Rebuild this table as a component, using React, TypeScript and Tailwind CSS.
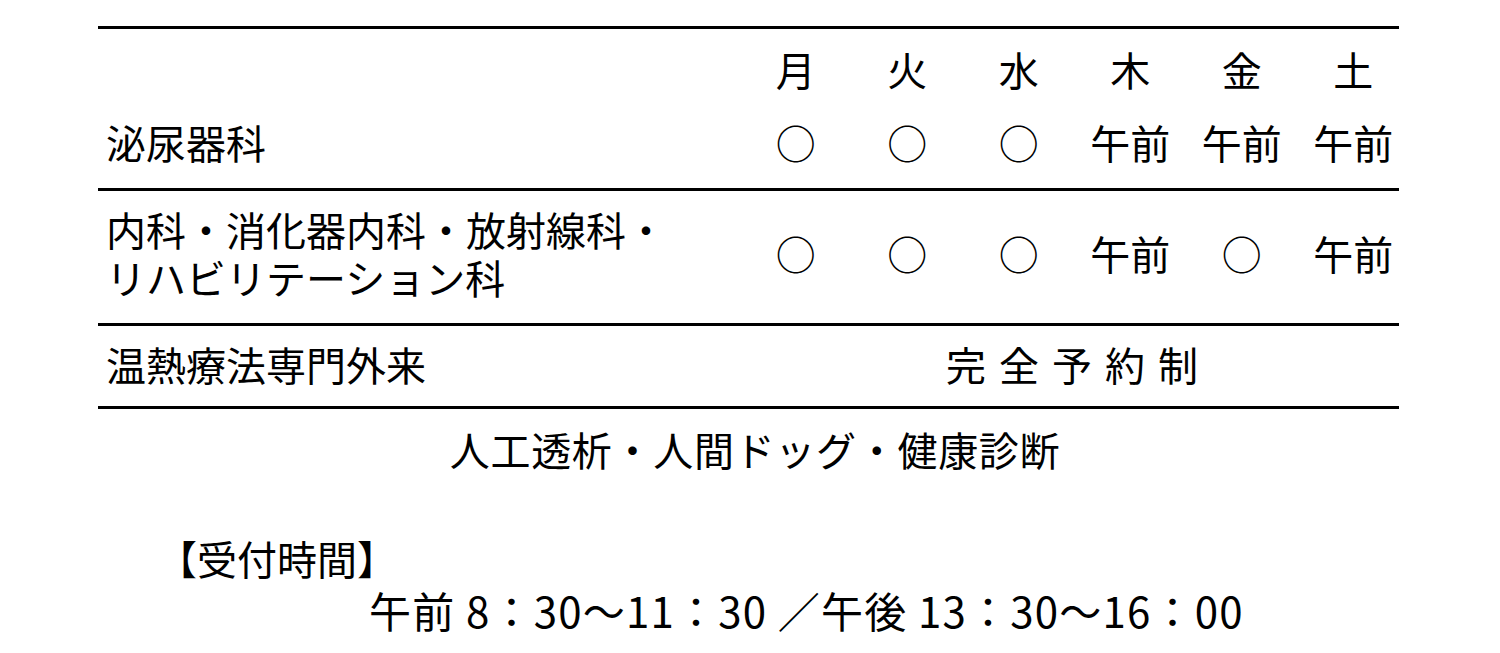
import React from 'react';

const days = ['月', '火', '水', '木', '金', '土'];

const rows = [
  {
    label: ['泌尿器科'],
    marks: ['○', '○', '○', '午前', '午前', '午前']
  },
  {
    label: ['内科・消化器内科・放射線科・', 'リハビリテーション科'],
    marks: ['○', '○', '○', '午前', '○', '午前']
  }
];

const App: React.FC = () => {
  return (
    <div className="w-[1500px] h-[653px] bg-white text-black font-['Noto_Sans_CJK_JP',sans-serif] text-[40px] leading-[40px] overflow-hidden">
      <div className="ml-[98px] w-[1301px] pt-[26px]">
        {/* 曜日 + 泌尿器科 */}
        <div className="border-t-[3px] border-black pt-[20px] pb-[26px]">
          <div className="grid grid-cols-[1fr_repeat(6,111.5px)] -mr-[10px]">
            <div></div>
            {days.map((d) => (
              <div key={d} className="text-center">{d}</div>
            ))}
          </div>
          <div className="grid grid-cols-[1fr_repeat(6,111.5px)] -mr-[10px] mt-[33px]">
            <div className="pl-[8px]">{rows[0].label[0]}</div>
            {rows[0].marks.map((m, i) => (
              <div key={i} className="text-center">{m}</div>
            ))}
          </div>
        </div>

        {/* 内科ほか */}
        <div className="border-t-[3px] border-black pt-[14px] pb-[22px]">
          <div className="grid grid-cols-[1fr_repeat(6,111.5px)] -mr-[10px] items-center">
            <div className="pl-[8px] leading-[48px]">
              {rows[1].label.map((l) => (
                <div key={l}>{l}</div>
              ))}
            </div>
            {rows[1].marks.map((m, i) => (
              <div key={i} className="text-center">{m}</div>
            ))}
          </div>
        </div>

        {/* 温熱療法 */}
        <div className="border-t-[3px] border-b-[3px] border-black pt-[18px] pb-[22px]">
          <div className="grid grid-cols-[1fr_669px] -mr-[10px]">
            <div className="pl-[8px]">温熱療法専門外来</div>
            <div className="text-center tracking-[13px] pl-[8px]">完全予約制</div>
          </div>
        </div>
      </div>

      <div className="mt-[20px] pl-[10px] text-center tracking-[0.7px]">人工透析・人間ドッグ・健康診断</div>

      <div className="mt-[69px] pl-[157px]">【受付時間】</div>
      <div className="mt-[12px] pl-[369px] text-[42px] tracking-[1.2px]">午前 8：30〜11：30 ／午後 13：30〜16：00</div>
    </div>
  );
};

export default App;
